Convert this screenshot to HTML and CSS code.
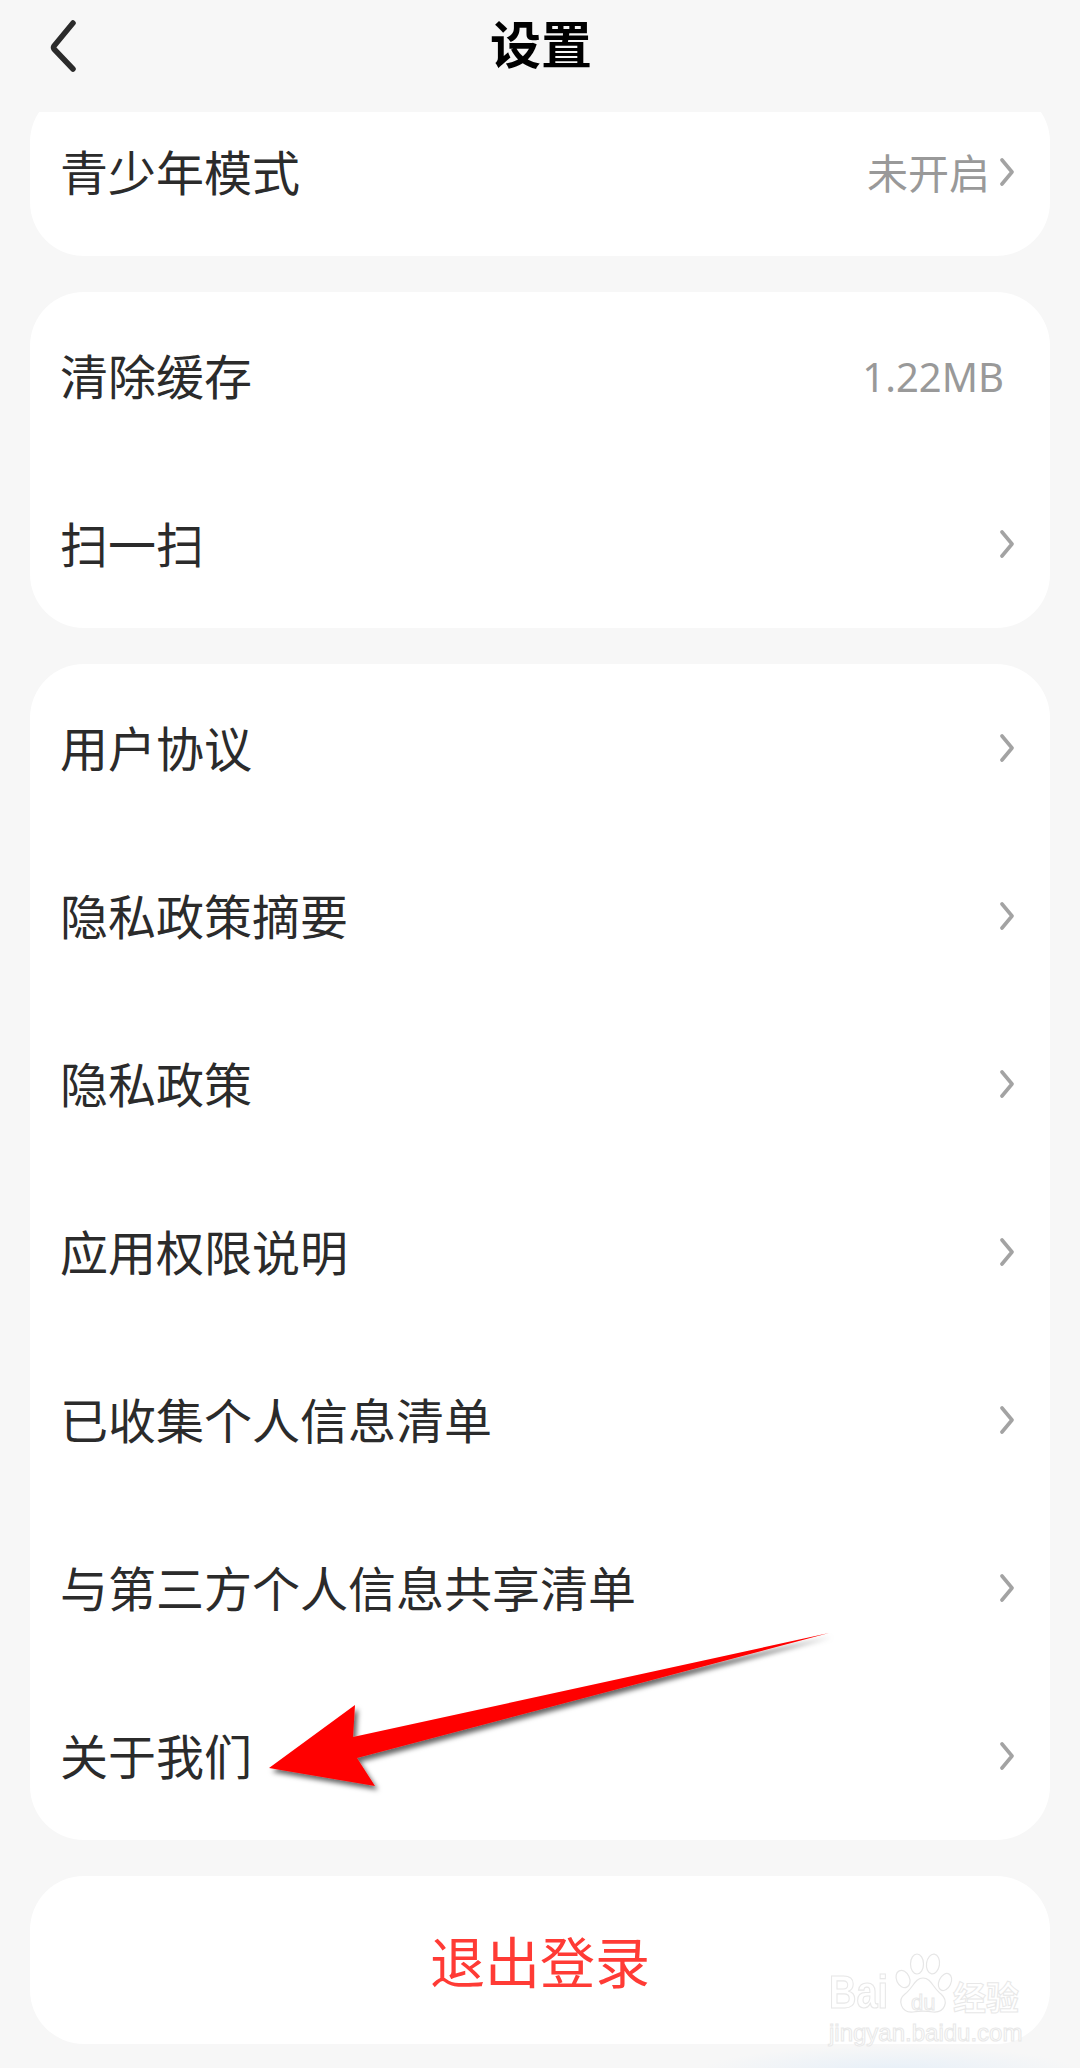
FILE: index.html
```html
<!DOCTYPE html>
<html lang="zh-CN">
<head>
<meta charset="utf-8">
<title>设置</title>
<link rel="stylesheet" href="styles.css">
</head>
<body>
<svg width="0" height="0" class="defs">
  <symbol id="chev" viewBox="0 0 14 28"><path d="M2 2 L12 14 L2 26" fill="none" stroke="#a3a3a3" stroke-width="3.6" stroke-linecap="round" stroke-linejoin="round"/></symbol>
</svg>
<div class="page">
  <header class="topbar">
    <svg class="back" viewBox="0 0 26 52"><path d="M23 3 L4 26 Q3 27.5 4 29 L23 49" fill="none" stroke="#2b2b2b" stroke-width="5.5" stroke-linecap="round" stroke-linejoin="round"/></svg>
    <h1 class="title">设置</h1>
  </header>
  <main class="list">
    <section class="card card-first">
      <div class="row"><span class="label">青少年模式</span><span class="value">未开启</span><svg class="chev chev-tight"><use href="#chev"/></svg></div>
    </section>
    <section class="card">
      <div class="row"><span class="label">清除缓存</span><span class="value value-cache">1.22MB</span></div>
      <div class="row"><span class="label">扫一扫</span><svg class="chev"><use href="#chev"/></svg></div>
    </section>
    <section class="card">
      <div class="row"><span class="label">用户协议</span><svg class="chev"><use href="#chev"/></svg></div>
      <div class="row"><span class="label">隐私政策摘要</span><svg class="chev"><use href="#chev"/></svg></div>
      <div class="row"><span class="label">隐私政策</span><svg class="chev"><use href="#chev"/></svg></div>
      <div class="row"><span class="label">应用权限说明</span><svg class="chev"><use href="#chev"/></svg></div>
      <div class="row"><span class="label">已收集个人信息清单</span><svg class="chev"><use href="#chev"/></svg></div>
      <div class="row"><span class="label">与第三方个人信息共享清单</span><svg class="chev"><use href="#chev"/></svg></div>
      <div class="row"><span class="label">关于我们</span><svg class="chev"><use href="#chev"/></svg></div>
    </section>
    <section class="card"><div class="row row-logout">退出登录</div></section>
  </main>
  <svg class="arrow" viewBox="0 0 1080 2068">
    <defs><filter id="shadow" x="-10%" y="-10%" width="120%" height="130%"><feDropShadow dx="3" dy="4" stdDeviation="2.5" flood-color="#000" flood-opacity=".6"/></filter></defs>
    <polygon points="829,1633 353,1737 355,1705 269,1768 375,1786 357,1758" fill="#ff0000" filter="url(#shadow)"/>
  </svg>
  <div class="mark">
    <div class="mark-top">
      <span class="mark-bai">Bai</span>
      <span class="paw">
        <svg viewBox="0 0 60 62"><g fill="none" stroke="#e6e6e6" stroke-width="1.2"><ellipse cx="10" cy="27" rx="6.5" ry="9" transform="rotate(-25 10 27)"/><ellipse cx="24" cy="12" rx="6.5" ry="10"/><ellipse cx="40" cy="12" rx="6.5" ry="10" transform="rotate(8 40 12)"/><ellipse cx="52" cy="30" rx="6" ry="9" transform="rotate(25 52 30)"/><path d="M30 26 C22 26 20 36 12 42 C4 48 8 61 20 60 C26 59 34 59 40 60 C52 61 56 49 48 42 C40 36 38 26 30 26 Z"/></g></svg>
        <span class="mark-du">du</span>
      </span>
      <span class="mark-cn">经验</span>
    </div>
    <div class="mark-url">jingyan.baidu.com</div>
  </div>
</div>
</body>
</html>
```
FILE: styles.css
```css
* { box-sizing: border-box; }
html, body { margin: 0; padding: 0; }
body { width: 1080px; height: 2068px; overflow: hidden; background: #f7f7f7; font-family: "Noto Sans CJK SC", "Noto Sans", sans-serif; }
.defs { position: absolute; }
.page {
  position: relative; width: 1080px; height: 2068px; overflow: hidden; display: flex; flex-direction: column;
  background: radial-gradient(ellipse 190px 26px at 890px 2072px, #e6eff8 0%, #f7f7f7 100%);
}
.topbar { height: 112px; flex: none; display: flex; align-items: center; justify-content: center; position: relative; }
.back { position: absolute; left: 50px; top: 20px; width: 26px; height: 52px; }
.title { margin: -26px 0 0 2px; font-size: 51px; line-height: 1.2; font-weight: 700; color: #000; }
.list { flex: 1; overflow: hidden; padding: 0 30px; display: flex; flex-direction: column; gap: 36px; }
.card { flex: none; background: #fff; border-radius: 54px; }
.card-first { margin-top: -24px; }
.row { height: 168px; padding: 0 36px 0 30px; display: flex; align-items: center; }
.label { font-size: 48px; color: #2b2b2b; flex: 1; white-space: nowrap; margin-bottom: 5px; }
.value { font-size: 41px; color: #999; white-space: nowrap; margin-bottom: 2px; }
.value-cache { margin-right: 10px; font-size: 40px; font-family: "Noto Sans", sans-serif; color: #999; margin-bottom: 0; }
.chev { width: 14px; height: 28px; flex: none; }
.chev-tight { margin-left: 10px; }
.row-logout { justify-content: center; padding: 0 0 2px; font-size: 55px; color: #ff3b35; }
.arrow { position: absolute; left: 0; top: 0; width: 1080px; height: 2068px; pointer-events: none; }
.mark { position: absolute; left: 829px; top: 1952px; width: 194px; }
.mark-top { display: flex; align-items: flex-end; height: 62px; }
.mark-bai, .mark-du, .mark-cn, .mark-url { color: #fff; -webkit-text-stroke: 1px #e8e8e8; white-space: nowrap; font-family: "Liberation Sans", sans-serif; }
.mark-bai { font-size: 38px; line-height: 36px; width: 64px; font-weight: 700; transform: scaleY(1.2); transform-origin: left bottom; }
.paw { position: relative; width: 60px; height: 62px; flex: none; }
.paw svg { width: 60px; height: 62px; display: block; }
.mark-du { position: absolute; left: 18px; top: 39px; font-size: 22px; line-height: 24px; }
.mark-cn { font-family: "Noto Sans CJK SC", sans-serif; font-size: 33px; line-height: 36px; font-weight: 700; }
.mark-url { font-size: 24px; line-height: 30px; margin-top: 4px; }
```
